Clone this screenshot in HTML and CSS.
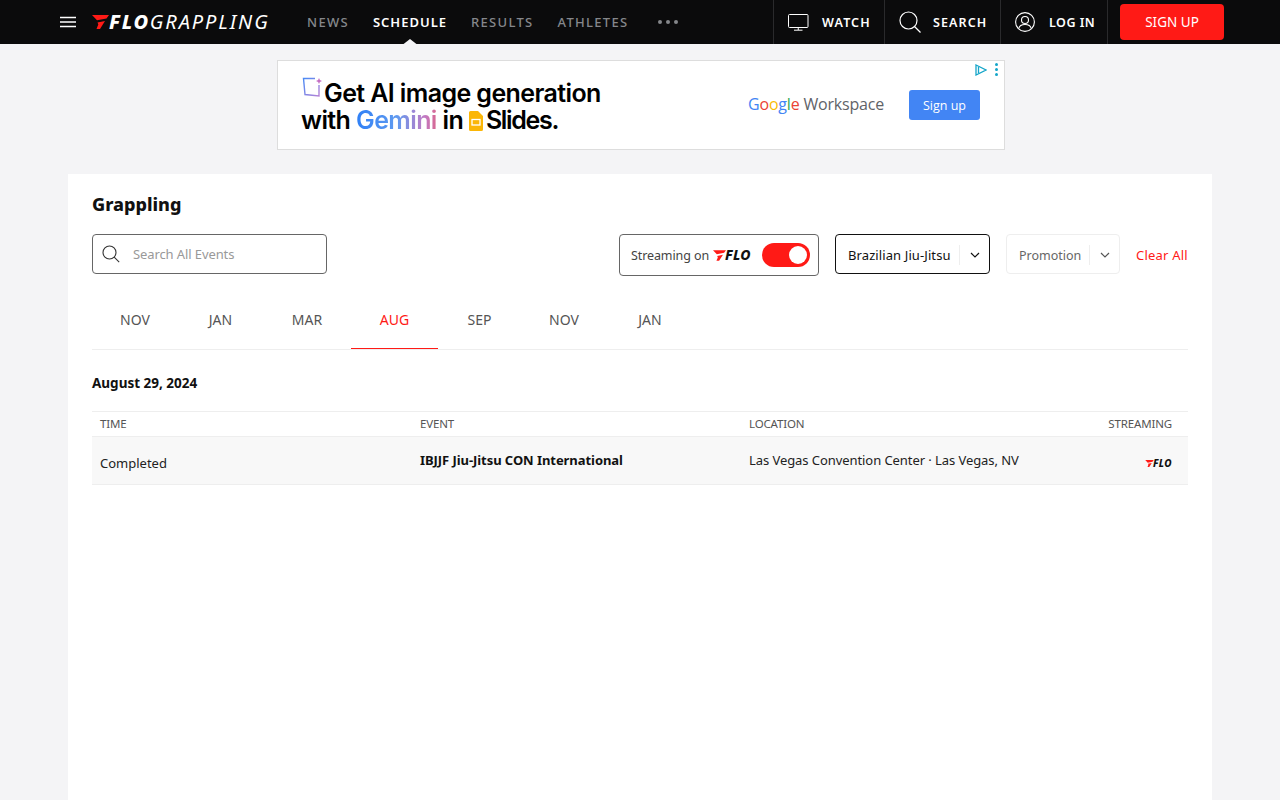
FILE: index.html
```html
<!DOCTYPE html>
<html lang="en">
<head>
    <meta charset="UTF-8">
    <meta name="viewport" content="width=device-width, initial-scale=1.0">
    <title>FloGrappling Schedule</title>
    <link rel="stylesheet" href="styles.css">
</head>
<body>
    <header class="topbar">
        <button class="menu-btn" aria-label="Menu">
            <svg width="16" height="12" viewBox="0 0 16 12"><path d="M0 1.500h16M0 6h16M0 10.500h16" stroke="#fff" stroke-width="1.500"/></svg>
        </button>
        <a class="brand">
            <svg class="flo-mark" width="17" height="14" viewBox="0 0 17 14"><path d="M0 0h17l-2.500 3.500-9.500 1.800zM5.500 7.500l7.500-1.500-5 8H4.500l1.800-4.500z" fill="#ff1a16"/></svg>
            <span class="brand-flo">FLO</span><span class="brand-name">GRAPPLING</span>
        </a>
        <nav class="main-nav">
            <a>NEWS</a>
            <a class="active">SCHEDULE</a>
            <a>RESULTS</a>
            <a>ATHLETES</a>
            <span class="more-dots"><i></i><i></i><i></i></span>
        </nav>
        <div class="top-actions">
            <a class="top-action watch">
                <svg width="21" height="17" viewBox="0 0 21 17" fill="none" stroke="#fff" stroke-width="1"><rect x="0.500" y="0.500" width="19.500" height="13" rx="1"/><path d="M10.250 13.500v2.500M6 16.200h8.500"/></svg>
                WATCH
            </a>
            <a class="top-action search">
                <svg width="22" height="22" viewBox="0 0 22 22" fill="none" stroke="#fff" stroke-width="1.200"><circle cx="9.500" cy="9.500" r="8.500"/><path d="M15.500 15.500l6 6"/></svg>
                SEARCH
            </a>
            <a class="top-action login">
                <svg width="20" height="20" viewBox="0 0 20 20" fill="none" stroke="#fff" stroke-width="1.100"><circle cx="10" cy="10" r="9.400"/><circle cx="10" cy="8" r="3.500"/><path d="M3.800 16.500c.6-3 3-4 6.200-4s5.600 1 6.200 4"/></svg>
                LOG IN
            </a>
            <a class="signup-btn">SIGN UP</a>
        </div>
    </header>

    <div class="ad-wrap">
        <div class="ad">
            <div class="ad-copy">
                <svg class="ad-spark" width="21" height="21" viewBox="0 0 21 21" fill="none"><path d="M13 1.500H1.500l1.500 16 14 1.500V8" stroke="url(#sparkLine)" stroke-width="1.400"/><path d="M17 1l.9 2.100L20 4l-2.100.9L17 7l-.9-2.100L14 4l2.100-.9z" fill="#c46fc4"/><defs><linearGradient id="sparkLine" x1="0" y1="0" x2="1" y2="1"><stop offset="0" stop-color="#4b8bf5"/><stop offset="1" stop-color="#b583d6"/></linearGradient></defs></svg>
                <p class="ad-line ad-line-one">Get AI image generation</p>
                <p class="ad-line">with <span class="gemini">Gemini</span> in <svg class="slides-icon" width="14" height="20" viewBox="0 0 14 20"><path d="M1.500 0H9l5 5v13.500a1.500 1.500 0 0 1-1.500 1.500h-11A1.500 1.500 0 0 1 0 18.500v-17A1.500 1.500 0 0 1 1.500 0z" fill="#fbb606"/><rect x="3" y="8.500" width="8" height="5.500" fill="none" stroke="#fff" stroke-width="1.300"/></svg><span class="ad-slides">Slides.</span></p>
            </div>
            <div class="ad-logo"><span class="g-blue">G</span><span class="g-red">o</span><span class="g-yellow">o</span><span class="g-blue">g</span><span class="g-green">l</span><span class="g-red">e</span> <span class="ad-workspace">Workspace</span></div>
            <a class="ad-btn">Sign up</a>
            <div class="ad-marks">
                <svg width="12" height="12" viewBox="0 0 12 12" fill="none" stroke="#14a5c9" stroke-width="1.300"><path d="M1 1l10 5-10 5z"/><path d="M3.500 3v6"/></svg>
                <span class="ad-dots"><i></i><i></i><i></i></span>
            </div>
        </div>
    </div>

    <main class="card">
        <h1>Grappling</h1>

        <div class="filters">
            <label class="search-box">
                <svg width="18" height="18" viewBox="0 0 18 18" fill="none" stroke="#333" stroke-width="1.100"><circle cx="7.500" cy="7.500" r="6.500"/><path d="M12.200 12.200l5 5"/></svg>
                <span>Search All Events</span>
            </label>
            <div class="filter-right">
                <div class="streaming-toggle">
                    <span class="streaming-label">Streaming on</span>
                    <span class="flo-logo">
                        <svg width="13" height="11" viewBox="0 0 17 14"><path d="M0 0h17l-2.500 3.500-9.500 1.800zM5.500 7.500l7.500-1.500-5 8H4.500l1.800-4.500z" fill="#ff1a16"/></svg><b>FLO</b>
                    </span>
                    <span class="switch"><i></i></span>
                </div>
                <div class="select select-on">
                    <span class="select-label">Brazilian Jiu-Jitsu</span>
                    <span class="select-caret"><svg width="10" height="6" viewBox="0 0 10 6" fill="none" stroke="#111" stroke-width="1.200"><path d="M1 1l4 4 4-4"/></svg></span>
                </div>
                <div class="select">
                    <span class="select-label">Promotion</span>
                    <span class="select-caret"><svg width="10" height="6" viewBox="0 0 10 6" fill="none" stroke="#555" stroke-width="1.200"><path d="M1 1l4 4 4-4"/></svg></span>
                </div>
                <a class="clear-all">Clear All</a>
            </div>
        </div>

        <div class="months">
            <a>NOV</a>
            <a>JAN</a>
            <a>MAR</a>
            <a class="active">AUG</a>
            <a>SEP</a>
            <a>NOV</a>
            <a>JAN</a>
        </div>

        <h2 class="day-title">August 29, 2024</h2>

        <div class="events">
            <div class="events-row events-head">
                <span>TIME</span>
                <span>EVENT</span>
                <span>LOCATION</span>
                <span class="col-stream">STREAMING</span>
            </div>
            <div class="events-row event">
                <span class="event-time">Completed</span>
                <span class="event-name">IBJJF Jiu-Jitsu CON International</span>
                <span class="event-place">Las Vegas Convention Center · Las Vegas, NV</span>
                <span class="col-stream flo-logo flo-small">
                    <svg width="9" height="7" viewBox="0 0 17 14"><path d="M0 0h17l-2.500 3.500-9.500 1.800zM5.500 7.500l7.500-1.500-5 8H4.500l1.800-4.500z" fill="#ff1a16"/></svg><b>FLO</b>
                </span>
            </div>
        </div>
    </main>
</body>
</html>
```

FILE: styles.css
```css
* {
    box-sizing: border-box;
}

body {
    margin: 0;
    height: 800px;
    overflow: hidden;
    background-color: #f4f4f6;
    color: #111;
    font-family: "Noto Sans", Arial, sans-serif;
    font-size: 13px;
}

a {
    color: inherit;
    text-decoration: none;
}

p, h1, h2 {
    margin: 0;
}

/* Top bar */
.topbar {
    display: flex;
    align-items: center;
    height: 44px;
    padding-left: 60px;
    background-color: #0b0b0c;
    color: #fff;
}

.menu-btn {
    display: flex;
    width: 16px;
    padding: 0;
    border: 0;
    background: none;
}

.brand {
    display: flex;
    align-items: center;
    width: 175px;
    margin-left: 16px;
    font-style: italic;
    font-size: 20px;
    line-height: 1;
    white-space: nowrap;
}

.flo-mark {
    flex: none;
}

.brand-flo {
    font-weight: 800;
    letter-spacing: 1.700px;
}

.brand-name {
    font-weight: 400;
    letter-spacing: 1.900px;
}

.main-nav {
    display: flex;
    align-items: center;
    gap: 24px;
    margin-left: 40px;
    height: 100%;
    font-size: 13px;
    font-weight: 500;
    letter-spacing: 1.300px;
    color: #85878b;
}

.main-nav a {
    position: relative;
}

.main-nav a.active {
    color: #fff;
    font-weight: 600;
    letter-spacing: 1px;
}

.main-nav a.active::after {
    content: "";
    position: absolute;
    left: 50%;
    bottom: -15px;
    margin-left: -9px;
    border-left: 9px solid transparent;
    border-right: 9px solid transparent;
    border-bottom: 7px solid #f4f4f6;
}

.more-dots {
    display: flex;
    gap: 4px;
    margin-left: 6px;
}

.more-dots i {
    width: 4px;
    height: 4px;
    border-radius: 50%;
    background-color: #85878b;
}

.top-actions {
    display: flex;
    align-items: center;
    height: 100%;
    margin-left: auto;
    padding-right: 56px;
}

.top-action {
    display: flex;
    align-items: center;
    height: 100%;
    border-left: 1px solid #2a2a2c;
    font-size: 12.500px;
    font-weight: 600;
    letter-spacing: 1.100px;
}

.watch {
    width: 111px;
    gap: 13px;
    padding-left: 14px;
}

.search {
    width: 116px;
    gap: 12px;
    padding-left: 14px;
}

.login {
    width: 108px;
    gap: 14px;
    padding-left: 14px;
    border-right: 1px solid #2a2a2c;
    letter-spacing: 0.500px;
}

.signup-btn {
    display: flex;
    align-items: center;
    justify-content: center;
    width: 104px;
    height: 36px;
    margin-left: 12px;
    border-radius: 4px;
    background-color: #ff1a16;
    font-size: 13.500px;
}

/* Ad */
.ad-wrap {
    display: flex;
    justify-content: center;
    padding: 16px 0 0 2px;
}

.ad {
    position: relative;
    display: flex;
    align-items: center;
    width: 728px;
    height: 90px;
    border: 1px solid #ddd;
    background-color: #fff;
}

.ad-copy {
    position: relative;
    width: 470px;
    padding: 3px 0 0 23px;
    font-family: Inter, Arial, sans-serif;
    font-size: 25px;
    font-weight: 600;
    line-height: 27px;
    letter-spacing: -0.6px;
    color: #000;
}

.ad-spark {
    position: absolute;
    left: 24px;
    top: 0;
}

.ad-line-one {
    padding-left: 23px;
}

.gemini {
    background: linear-gradient(90deg, #2f80f6 0%, #5f9af0 50%, #c27ac4 85%, #d9688f 100%);
    -webkit-background-clip: text;
    background-clip: text;
    color: transparent;
}

.slides-icon {
    vertical-align: -2px;
    margin-right: 3px;
}

.ad-slides {
    letter-spacing: -1.300px;
}

.ad-logo {
    width: 161px;
    padding-bottom: 3px;
    font-family: "Open Sans", Arial, sans-serif;
    font-size: 16px;
    letter-spacing: -0.2px;
    white-space: nowrap;
}

.g-blue { color: #4285f4; }
.g-red { color: #ea4335; }
.g-yellow { color: #fbbc05; }
.g-green { color: #34a853; }

.ad-workspace {
    color: #5f6368;
}

.ad-btn {
    display: flex;
    align-items: center;
    justify-content: center;
    width: 71px;
    height: 30px;
    border-radius: 3px;
    background-color: #4285f4;
    color: #fff;
    font-family: "Open Sans", Arial, sans-serif;
    font-size: 12.500px;
    font-weight: 500;
}

.ad-marks {
    position: absolute;
    top: 2px;
    right: 6px;
    display: flex;
    align-items: center;
    gap: 8px;
}

.ad-dots {
    display: flex;
    flex-direction: column;
    gap: 2px;
}

.ad-dots i {
    width: 3px;
    height: 3px;
    border-radius: 50%;
    background-color: #14a5c9;
}

/* Main card */
.card {
    margin: 24px 68px 0;
    height: 626px;
    padding: 18px 24px 0;
    background-color: #fff;
}

h1 {
    font-size: 18px;
    line-height: 24px;
    font-weight: 800;
}

.filters {
    display: flex;
    justify-content: space-between;
    align-items: flex-start;
    margin-top: 18px;
}

.search-box {
    display: flex;
    align-items: center;
    gap: 13px;
    width: 235px;
    height: 40px;
    padding-left: 9px;
    border: 1px solid #666;
    border-radius: 4px;
    color: #999;
    letter-spacing: -0.1px;
}

.filter-right {
    display: flex;
    align-items: flex-start;
}

.streaming-toggle {
    display: flex;
    align-items: center;
    width: 200px;
    height: 42px;
    margin-right: 16px;
    padding: 0 8px 0 11px;
    border: 1px solid #666;
    border-radius: 4px;
    color: #444;
}

.streaming-label {
    font-size: 12.500px;
    letter-spacing: -0.1px;
}

.flo-logo {
    display: inline-flex;
    align-items: center;
    margin-left: 4px;
}

.flo-logo b {
    margin-left: -1px;
    font-size: 14px;
    font-style: italic;
    font-weight: 800;
    line-height: 1;
    letter-spacing: 0.300px;
    color: #111;
}

.switch {
    display: flex;
    justify-content: flex-end;
    align-items: center;
    width: 48px;
    height: 24px;
    margin-left: auto;
    padding-right: 3px;
    border-radius: 12px;
    background-color: #ff1a16;
}

.switch i {
    width: 18px;
    height: 18px;
    border-radius: 50%;
    background-color: #fff;
}

.select {
    display: flex;
    align-items: center;
    height: 40px;
    width: 114px;
    padding: 2px 0 0 12px;
    border: 1px solid #eee;
    border-radius: 4px;
    font-size: 12.500px;
    color: #666;
}

.select-on {
    width: 155px;
    margin-right: 16px;
    border-color: #111;
    color: #111;
    font-size: 13px;
    letter-spacing: 0.100px;
}

.select-label {
    flex: 1;
    white-space: nowrap;
}

.select-caret {
    display: flex;
    align-items: center;
    justify-content: center;
    flex: none;
    width: 30px;
    height: 20px;
    border-left: 1px solid #eee;
}

.clear-all {
    width: 52px;
    margin-left: 16px;
    line-height: 42px;
    letter-spacing: 0.200px;
    white-space: nowrap;
    color: #ff1a16;
}

/* Month tabs */
.months {
    display: flex;
    margin-top: 20px;
    border-bottom: 1px solid #eee;
}

.months a {
    width: 86px;
    height: 53px;
    line-height: 48px;
    text-align: center;
    font-size: 14px;
    color: #555;
}

.months a:nth-child(2) { width: 85px; }
.months a:nth-child(3) { width: 88px; }
.months a:nth-child(4) { width: 87px; }
.months a:nth-child(5) { width: 83px; }

.months a.active {
    color: #ff1a16;
    border-bottom: 1px solid #ff1a16;
    margin-bottom: -1px;
}

.day-title {
    margin-top: 24px;
    font-size: 13.500px;
    line-height: 18px;
    font-weight: 700;
}

/* Events table */
.events {
    margin-top: 19px;
    border-top: 1px solid #eee;
}

.events-row {
    display: grid;
    grid-template-columns: 320px 329px 1fr 100px;
    padding: 0 16px 0 8px;
    border-bottom: 1px solid #eee;
}

.events-head {
    height: 25px;
    padding-bottom: 2px;
    align-items: center;
    font-size: 11.500px;
    letter-spacing: -0.150px;
    color: #555;
}

.event {
    height: 48px;
    background-color: #f8f8f8;
    align-items: center;
}

.event-time {
    padding-top: 4px;
    color: #222;
}

.event-name {
    padding-bottom: 2px;
    font-weight: 700;
    letter-spacing: -0.060px;
}

.event-place {
    padding-bottom: 2px;
    letter-spacing: -0.070px;
    color: #222;
}

.col-stream {
    justify-self: end;
}

.flo-small {
    margin-left: 0;
    padding-top: 5px;
}

.flo-small b {
    font-size: 10px;
    letter-spacing: 0.400px;
}
```
